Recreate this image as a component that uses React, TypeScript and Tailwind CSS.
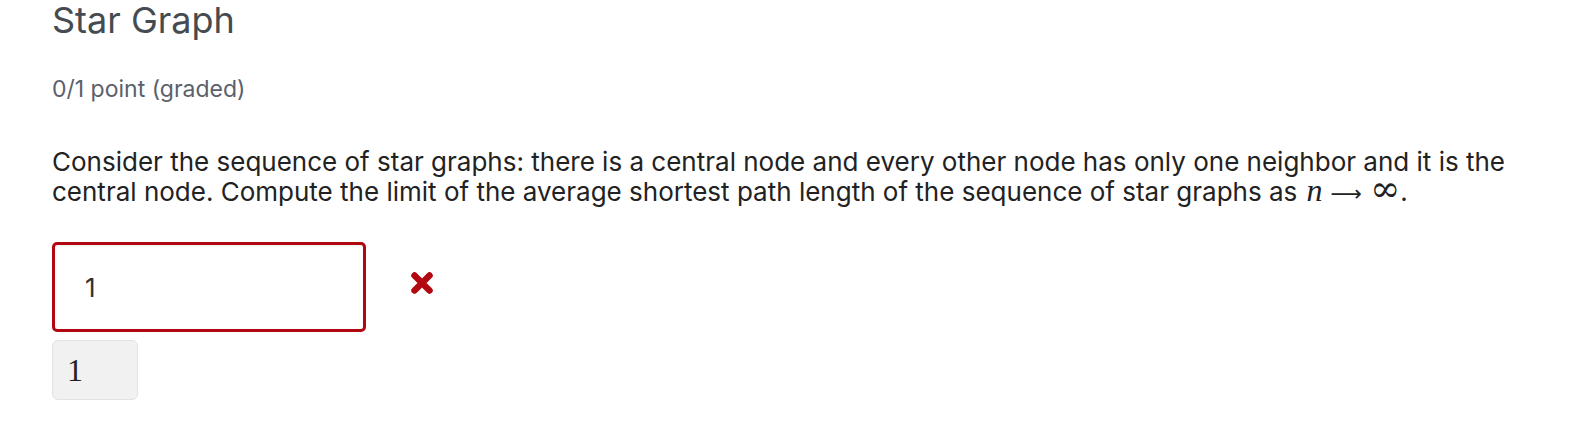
export default function App() {
  return (
    <div
      className="min-h-screen bg-white text-[#313131] px-[52px]"
      style={{ fontFamily: 'Inter, "Noto Sans", sans-serif' }}
    >
      <h2 className="text-[36px] leading-[40px] text-[#454b50] font-normal">Star Graph</h2>
      <div className="mt-[35px] text-[23px] leading-[28px] text-[#5b616b]">0/1 point (graded)</div>

      <p className="mt-[44px] text-[26px] leading-[30px] text-[#222]">
        Consider the sequence of star graphs: there is a central node and every other node has only one
        neighbor and it is the central node. Compute the limit of the average shortest path length of the
        sequence of star graphs as{' '}
        <span className="leading-[0px]" style={{ fontFamily: '"Liberation Serif", serif' }}>
          <i className="text-[32px] ml-[2px]">n</i>
          <span className="mx-[8px] text-[22px]" style={{ fontFamily: '"DejaVu Sans", sans-serif' }}>
            ⟶
          </span>
          <span className="text-[36px]" style={{ fontFamily: '"DejaVu Serif", serif' }}>∞</span>
        </span>
        .
      </p>

      <div className="mt-[35px] flex items-center">
        <div className="w-[314px] h-[90px] border-[3px] border-[#b20610] rounded-[5px] flex items-center pl-[30px] text-[26px] text-[#313131] shadow-[inset_0_1px_2px_rgba(0,0,0,0.08)]">
          1
        </div>
        <svg className="ml-[44px] mb-[8px]" width="24" height="24" viewBox="0 0 24 24">
          <path d="M4.5 4.5 L19.5 19.5 M19.5 4.5 L4.5 19.5" stroke="#b20610" strokeWidth="6.5" strokeLinecap="round" />
        </svg>
      </div>

      <div
        className="mt-[8px] w-[86px] h-[60px] bg-[#f1f1f1] border border-[#e2e2e2] rounded-[6px] flex items-center pl-[14px] text-[32px] text-[#222]"
        style={{ fontFamily: '"Liberation Serif", serif' }}
      >
        1
      </div>
    </div>
  );
}
